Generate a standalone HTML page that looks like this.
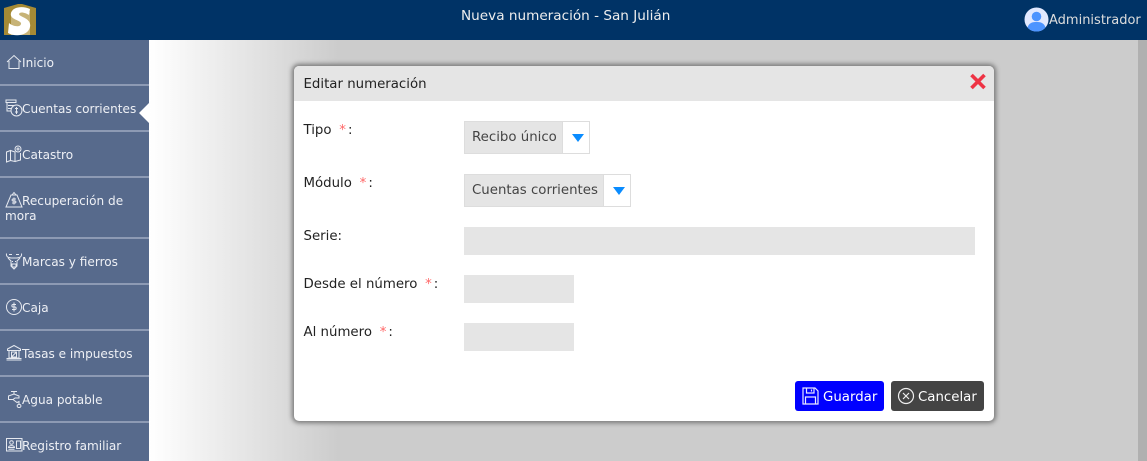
<!DOCTYPE html>
<html><head><meta charset="utf-8"><style>
html,body{margin:0;padding:0;width:1147px;height:461px;overflow:hidden}
body{position:relative;font-family:"DejaVu Sans",sans-serif;font-size:13px;background:#ccc}
.a{position:absolute;white-space:nowrap}
#bg{left:149px;top:40px;width:989px;height:421px;background:linear-gradient(90deg,#fff 0,#ccc 190px,#ccc 100%)}
#sb{left:1138px;top:40px;width:9px;height:421px;background:#b0b0b0}
#top{left:0;top:0;width:1147px;height:40px;background:#003366}
#side{left:0;top:40px;width:149px;height:421px;background:#576a8c}
.sep{position:absolute;left:0;width:149px;height:2px;background:#8d9ab4}
.m{position:absolute;left:5px;width:140px;text-indent:17px;color:#eef0f5;font-size:12.1px;line-height:15px;white-space:nowrap}
.i{position:absolute;left:5px;width:18px;height:18px;fill:none;stroke:#e6e9f0;stroke-width:1}
#dlg{left:294px;top:66px;width:700px;height:355px;background:#fff;border-radius:5px;box-shadow:0 0 5px 2px #777}
#hd{left:0;top:0;width:700px;height:35px;background:#e5e5e5;border-radius:5px 5px 0 0}
.l{position:absolute;color:#222;font-size:13.33px;line-height:17px;white-space:nowrap}
.l b{font-weight:normal;color:#f66;margin:0 2px 0 3.500px}
.in{position:absolute;background:#e5e5e5}
.sel{position:absolute;height:31px;border:1px solid #ddd;background:#fff;box-sizing:content-box}
.sel span{position:absolute;left:0;top:0;height:31px;background:#e5e5e5;color:#444;font-size:13.33px;line-height:31px;padding-left:7px;box-sizing:border-box;border-right:1px solid #ddd;white-space:nowrap}
.tri{position:absolute;width:0;height:0;border-left:6px solid transparent;border-right:6px solid transparent;border-top:8px solid #0a8cff}
.btn{position:absolute;top:315px;height:30px;border-radius:3px;color:#fff;font-size:13.33px;line-height:33px;white-space:nowrap}
</style></head><body>
<div class="a" id="bg"></div><div class="a" id="sb"></div>
<div class="a" id="top">
<svg style="position:absolute;left:4px;top:3px" width="32" height="33" viewBox="0 0 32 33"><path d="M0 5L14 1L18 1L32 5V32H0Z" fill="#a58a35"/><path d="M7 9H26V32H7Z" fill="#c7b377"/><path d="M26 6C20 3 9 3 7 10C5 17 18 17 17 21C16 25 8 23 5 20L4 30C11 34 24 33 26 24C28 15 15 14 15 11C16 8 22 10 25 12Z" fill="#fff"/></svg>
<div class="a" style="left:461px;top:8px;color:#eee;font-size:13.6px;line-height:16px">Nueva numeración - San Julián</div>
<svg style="position:absolute;left:1024px;top:7px" width="25" height="25" viewBox="0 0 25 25"><circle cx="12.5" cy="12.5" r="12" fill="#e2e9ff"/><circle cx="12.5" cy="9.5" r="4.8" fill="#4d94ff"/><path d="M3.5 20.5C5 15.5 9 15 12.5 15S20 15.5 21.5 20.5C19 23.500 16 24.500 12.500 24.500S6 23.500 3.500 20.500Z" fill="#4d94ff"/></svg>
<div class="a" style="left:1049px;top:13px;color:#ddd;font-size:13px;line-height:16px">Administrador</div>
</div>
<div class="a" id="side">
<div class="sep" style="top:44px"></div><div class="sep" style="top:90px"></div><div class="sep" style="top:136px"></div><div class="sep" style="top:197px"></div><div class="sep" style="top:243px"></div><div class="sep" style="top:289px"></div><div class="sep" style="top:335px"></div><div class="sep" style="top:381px"></div>
<div class="m" style="top:16px">Inicio</div>
<div class="m" style="top:62px">Cuentas corrientes</div>
<div class="m" style="top:108px">Catastro</div>
<div class="m" style="top:154px">Recuperación de<br><span style="display:block;text-indent:0">mora</span></div>
<div class="m" style="top:215px">Marcas y fierros</div>
<div class="m" style="top:261px">Caja</div>
<div class="m" style="top:307px">Tasas e impuestos</div>
<div class="m" style="top:353px">Agua potable</div>
<div class="m" style="top:399px">Registro familiar</div>
<svg class="i" style="top:13px" viewBox="0 0 18 18"><path d="M2 9L9 2.500L16 9M4 8V15.500H14V8"/></svg>
<svg class="i" style="top:59px" viewBox="0 0 18 18"><path d="M1 1H11V3.500H1ZM2 3.500V12H6M3 6.500H9M3 9.500H7"/><circle cx="11.500" cy="11.500" r="5.500"/><path d="M11.500 8V15M10 9.500H13M10 13H13"/></svg>
<svg class="i" style="top:105px" viewBox="0 0 18 18"><path d="M1.500 7L5.500 5.500V15.500L1.500 17ZM5.500 5.500L10 7V16.500L5.500 15.500M10 16.500L15.500 15V8"/><circle cx="13" cy="4" r="3"/><circle cx="13" cy="4" r="1"/></svg>
<svg class="i" style="top:151px" viewBox="0 0 18 18"><path d="M7 4L9 1.500L11 4ZM6 4H12L17 16H1Z"/><path d="M9 6.500V13.500M11 8H8C6.800 8 6.800 10 8 10H10C11.200 10 11.200 12 10 12H7"/></svg>
<svg class="i" style="top:212px" viewBox="0 0 18 18"><path d="M1.500 1.500C1 5 3 5.500 6 6H12C15 5.500 17 5 16.500 1.500M4 2.500H7M11 2.500H14M3 6L6 9V14L9 17L12 14V9L15 6M7 12H11V15H7ZM7 9.500H8M10 9.500H11"/></svg>
<svg class="i" style="top:258px" viewBox="0 0 18 18"><circle cx="9" cy="9" r="7.500"/><path d="M9 4.500V13.500M11 6.500H8C6.500 6.500 6.500 9 8 9H10C11.500 9 11.500 11.500 10 11.500H7"/></svg>
<svg class="i" style="top:304px" viewBox="0 0 18 18"><path d="M2.500 5L9 1.500L15.500 5V6.500H2.500ZM4 6.500V14H14V6.500M1.500 14.500H16.500M1.500 16H16.500M6.500 8H11.500V13H6.500ZM6.500 13L11.500 8"/></svg>
<svg class="i" style="top:350px" viewBox="0 0 18 18"><path d="M6 1.500H12M9 1.500V4M3.500 6L9 4L14 6V8H10L8 9.500H3.500ZM8 9.500L12 12.500L14 11.500V14M14 14.500A1.500 1.500 0 1 0 14.100 17.400A1.500 1.500 0 1 0 14 14.500"/></svg>
<svg class="i" style="top:396px" viewBox="0 0 18 18"><path d="M1.500 2.500H17V15H1.500ZM11.500 5H15.500V12.500H11.500Z"/><circle cx="6.500" cy="6.500" r="1.800"/><path d="M3.500 11.500C3.500 9 9.500 9 9.500 11.500ZM3.500 13.200H9.500"/></svg>
</div>
<svg class="a" style="left:139px;top:101px" width="10" height="24" viewBox="0 0 10 24"><path d="M10 2L0 12L10 22Z" fill="#fff"/></svg>
<div class="a" id="dlg">
<div class="a" id="hd"></div>
<div class="l" style="left:9.500px;top:10px;color:#222">Editar numeración</div>
<svg style="position:absolute;left:675px;top:7px" width="18" height="17" viewBox="0 0 18 17"><path d="M2.500 2L15.500 15M15.500 2L2.500 15" stroke="#ee3344" stroke-width="3.600" fill="none"/></svg>
<div class="l" style="left:9.500px;top:56px">Tipo <b>*</b>:</div>
<div class="sel" style="left:170px;top:55px;width:124px"><span style="width:98px">Recibo único</span><i class="tri" style="left:107px;top:12px"></i></div>
<div class="l" style="left:9.500px;top:109px">Módulo <b>*</b>:</div>
<div class="sel" style="left:170px;top:108px;width:165px"><span style="width:139px">Cuentas corrientes</span><i class="tri" style="left:148px;top:12px"></i></div>
<div class="l" style="left:9.500px;top:162px">Serie:</div>
<div class="in" style="left:170px;top:161px;width:511px;height:28px"></div>
<div class="l" style="left:9.500px;top:210px">Desde el número <b>*</b>:</div>
<div class="in" style="left:170px;top:209px;width:110px;height:28px"></div>
<div class="l" style="left:9.500px;top:258px">Al número <b>*</b>:</div>
<div class="in" style="left:170px;top:257px;width:110px;height:28px"></div>
<div class="btn" style="left:501px;width:89px;background:#0000ff"><svg style="position:absolute;left:7px;top:6px" width="17" height="18" viewBox="0 0 17 18" fill="none" stroke="#e8e8ff" stroke-width="1.200"><path d="M1 1H13L16 4V17H1ZM4.500 1V6H12V1M9.500 2.500V4.500M3.500 17V10H13.500V17"/></svg><span style="position:absolute;left:28px">Guardar</span></div>
<div class="btn" style="left:597px;width:93px;background:#444"><svg style="position:absolute;left:6px;top:6px" width="18" height="18" viewBox="0 0 18 18" fill="none" stroke="#eee" stroke-width="1.200"><circle cx="9" cy="9" r="7.500"/><path d="M6 6L12 12M12 6L6 12"/></svg><span style="position:absolute;left:27px">Cancelar</span></div>
</div>
</body></html>
